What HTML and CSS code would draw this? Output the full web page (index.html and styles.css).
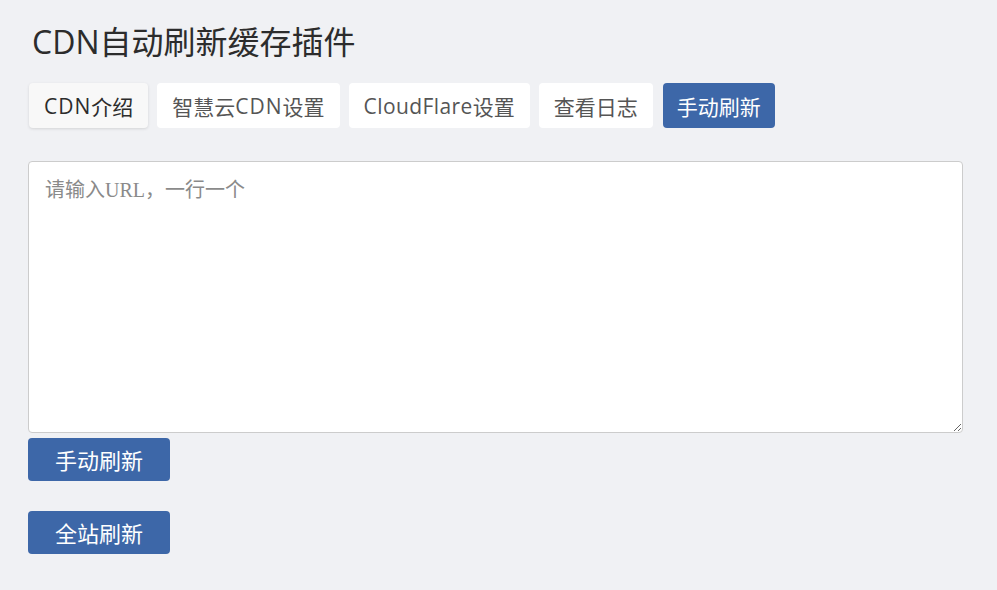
FILE: index.html
```html
<!DOCTYPE html>
<html lang="zh-CN">
<head>
<meta charset="utf-8">
<title>CDN自动刷新缓存插件</title>
<link rel="stylesheet" href="styles.css">
</head>
<body>
<div class="wrap">
  <h1 class="title">CDN自动刷新缓存插件</h1>
  <nav class="tabs">
    <a class="tab tab-first"><span class="lat">CDN</span>介绍</a>
    <a class="tab">智慧云<span class="lat">CDN</span>设置</a>
    <a class="tab"><span class="lat-narrow">CloudFlare</span>设置</a>
    <a class="tab">查看日志</a>
    <a class="tab tab-active">手动刷新</a>
  </nav>
  <form class="form">
    <textarea class="urls" placeholder="请输入URL，一行一个"></textarea>
    <button type="button" class="btn">手动刷新</button>
    <button type="button" class="btn btn-all">全站刷新</button>
  </form>
</div>
</body>
</html>
```
FILE: styles.css
```css
* { box-sizing: border-box; }
html, body { margin: 0; padding: 0; }
body {
  background: #f0f1f4;
  font-family: "Open Sans", "Noto Sans", "Noto Sans CJK SC", sans-serif;
  color: #333;
}
.wrap {
  padding: 20px 35px 0 28px;
}
.title {
  margin: 0 0 0 4px;
  font-size: 32px;
  font-weight: 400;
  line-height: 44px;
  color: #2c2c2c;
}
.tabs {
  display: flex;
  gap: 9px;
  margin-top: 19px;
}
.tab {
  display: flex;
  align-items: center;
  height: 45px;
  padding: 0 15px;
  background: #fff;
  border-radius: 4px;
  font-size: 21px;
  color: #555;
  white-space: nowrap;
}
.lat { letter-spacing: 1px; }
.lat-narrow { letter-spacing: 0.4px; }
.tab-first {
  margin-left: 1px;
  background: #f8f8f8;
  color: #2c2c2c;
  box-shadow: 0 1px 3px rgba(0,0,0,0.12);
}
.tab-active {
  background: #3d67a8;
  color: #fff;
  margin-left: 1px;
  padding: 0 14px;
}
.form {
  display: flex;
  flex-direction: column;
  align-items: flex-start;
  margin-top: 33px;
}
.urls {
  width: 935px;
  height: 272px;
  border: 1px solid #cccccc;
  border-radius: 4px;
  background: #fff;
  padding: 12px 16px;
  font-family: "Liberation Serif", "Noto Sans CJK SC", serif;
  font-size: 20px;
  color: #333;
  resize: vertical;
  outline: none;
}
.urls::placeholder { color: #8a8a8a; }
.btn {
  margin-top: 5px;
  width: 142px;
  height: 43px;
  border: none;
  border-radius: 4px;
  background: #3d67a8;
  color: #fff;
  font-family: "Open Sans", "Noto Sans", "Noto Sans CJK SC", sans-serif;
  font-size: 22px;
  line-height: 1;
  cursor: pointer;
}
.btn-all { margin-top: 30px; }
```
